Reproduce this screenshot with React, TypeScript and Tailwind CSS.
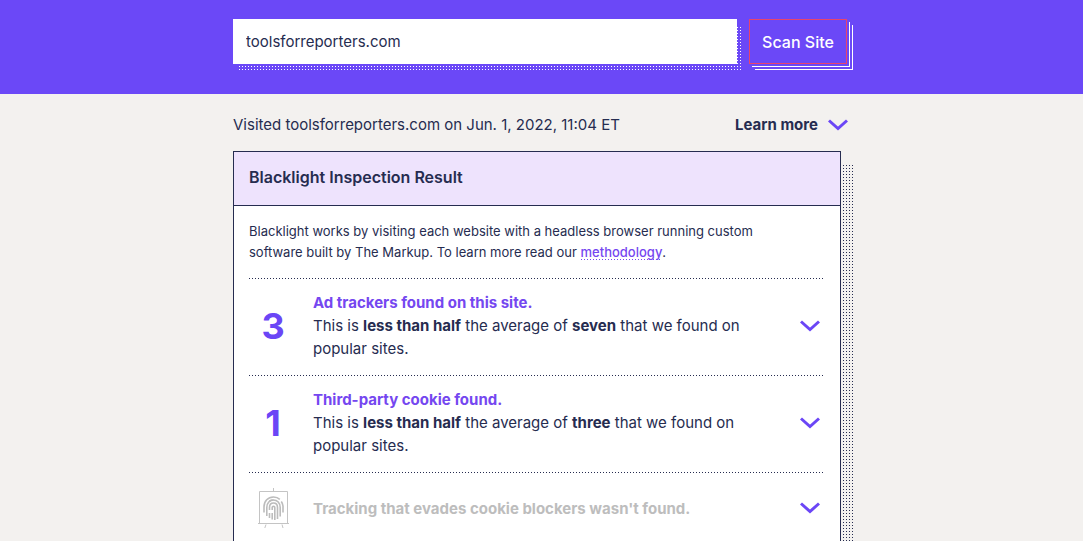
import { type ReactNode } from "react";

function Chevron() {
  return (
    <svg className="h-3 w-5 shrink-0" viewBox="0 0 20 12" fill="none" stroke="#6b46f6" strokeWidth="3" aria-hidden="true">
      <path d="M1 1.500 L10 9.500 L19 1.500" />
    </svg>
  );
}

function FingerprintEasel() {
  return (
    <svg className="my-[3px] h-10 w-8" viewBox="0 0 32 40" fill="none" stroke="#c4c4c4" aria-hidden="true">
      <path d="M16.500 0v3M1 35.500h31M9 36.500l-1.200 3.500M25 36.500l1 3.500" />
      <path d="M2.500 3.500h28v32h-28z" />
      <g strokeWidth="1.6" stroke="#bcbcbc">
        <path d="M7 24.500v-5.500c0-6 4-10 9.500-10 2.700 0 4.700 .8 6.300 2.300" />
        <path d="M24.300 13.500c.9 1.300 1.500 3 1.700 4.500v6.500" />
        <path d="M9.800 28v-8.500c0-4.500 3-7.500 6.700-7.500s6.700 3 6.700 7.500v9" />
        <path d="M12.300 13.200c1.200-.8 2.500-1.200 4.200-1.200" />
        <path d="M12.500 22v-2.500c0-2.700 1.500-4.500 4-4.500s4 1.800 4 4.500v11.500" />
        <path d="M12.500 25v5M15.200 25v6.500M15.200 22v-2.500c0-1.700 2.600-1.700 2.600 0v12.500" />
      </g>
    </svg>
  );
}

function DottedLine() {
  return <div className="h-px bg-[repeating-linear-gradient(90deg,#262c50_0_1px,transparent_1px_3px)]" />;
}

function ResultRow({ mark, title, muted, children }: { mark: ReactNode; title: string; muted?: boolean; children?: ReactNode }) {
  return (
    <button type="button" className="flex w-full items-center pb-[15px] pr-[5px] pt-3 text-left">
      <span className="flex w-12 shrink-0 justify-center text-4xl font-bold text-[#6b46f6]">{mark}</span>
      <span className="ml-4 mr-12 flex-1 leading-[23px]">
        <span className={muted ? "block font-bold text-[#bdbdbd]" : "block font-bold text-[#7547f0]"}>{title}</span>
        {children}
      </span>
      <Chevron />
    </button>
  );
}

function Strong({ children }: { children: ReactNode }) {
  return <strong className="font-bold">{children}</strong>;
}

export default function App() {
  return (
    <div className="min-h-screen bg-[#f3f1ef] font-[Inter,sans-serif] text-[15px] text-[#262c50]">
      <header className="bg-[#6b48f7] px-4 pb-[30px] pt-[19px]">
        <form className="mx-auto flex w-full max-w-[617px] gap-3 pr-[3px]" onSubmit={(e) => e.preventDefault()}>
          <div className="relative flex-1">
            <div className="absolute -bottom-[6px] -right-[4px] left-[6px] top-2 bg-[linear-gradient(90deg,transparent_1px,#6b48f7_1px),linear-gradient(#fff_1px,#6b48f7_1px)] bg-[size:3px_3px]" />
            <input aria-label="Website address" defaultValue="toolsforreporters.com" className="relative h-[45px] w-full bg-white px-[13px] outline-none" />
          </div>
          <button type="submit" className="h-[45px] w-[98px] border border-[#e8446c] bg-[#6b48f7] text-base font-medium text-white shadow-[2px_2px_0_#6b48f7,3px_3px_0_#fff,5px_5px_0_#6b48f7,6px_6px_0_#fff]">
            Scan Site
          </button>
        </form>
      </header>
      <main className="mx-auto w-full max-w-[617px] pb-8">
        <div className="flex h-[57px] items-center justify-between pr-[2px] pt-[5px]">
          <p>Visited toolsforreporters.com on Jun. 1, 2022, 11:04 ET</p>
          <button type="button" className="flex items-center gap-[10px] font-bold">
            Learn more <Chevron />
          </button>
        </div>
        <section className="relative mr-[9px]">
          <div className="absolute -right-3 bottom-0 left-4 top-[14px] bg-[linear-gradient(90deg,transparent_1px,#f3f1ef_1px),linear-gradient(#262c50_1px,#f3f1ef_1px)] bg-[size:3px_3px]" />
          <div className="relative border border-[#262c50] bg-white">
            <h1 className="border-b border-[#262c50] bg-[#eee3fd] px-[15px] pb-[15px] pt-[13px] text-base font-semibold leading-[25px]">Blacklight Inspection Result</h1>
            <div className="px-[15px] pt-[15px]">
              <p className="mb-[15px] mr-8 text-[13px] leading-[21px]">
                Blacklight works by visiting each website with a headless browser running custom software built by The Markup. To learn more read our{" "}
                <a href="#methodology" className="bg-[repeating-linear-gradient(90deg,#7547f0_0_1px,transparent_1px_3px)] bg-[size:100%_1px] bg-bottom bg-no-repeat font-medium text-[#7547f0]">methodology</a>.
              </p>
              <DottedLine />
              <ResultRow mark="3" title="Ad trackers found on this site.">
                This is <Strong>less than half</Strong> the average of <Strong>seven</Strong> that we found on popular sites.
              </ResultRow>
              <DottedLine />
              <ResultRow mark="1" title="Third-party cookie found.">
                This is <Strong>less than half</Strong> the average of <Strong>three</Strong> that we found on popular sites.
              </ResultRow>
              <DottedLine />
              <ResultRow muted mark={<FingerprintEasel />} title="Tracking that evades cookie blockers wasn't found." />
            </div>
          </div>
        </section>
      </main>
    </div>
  );
}
